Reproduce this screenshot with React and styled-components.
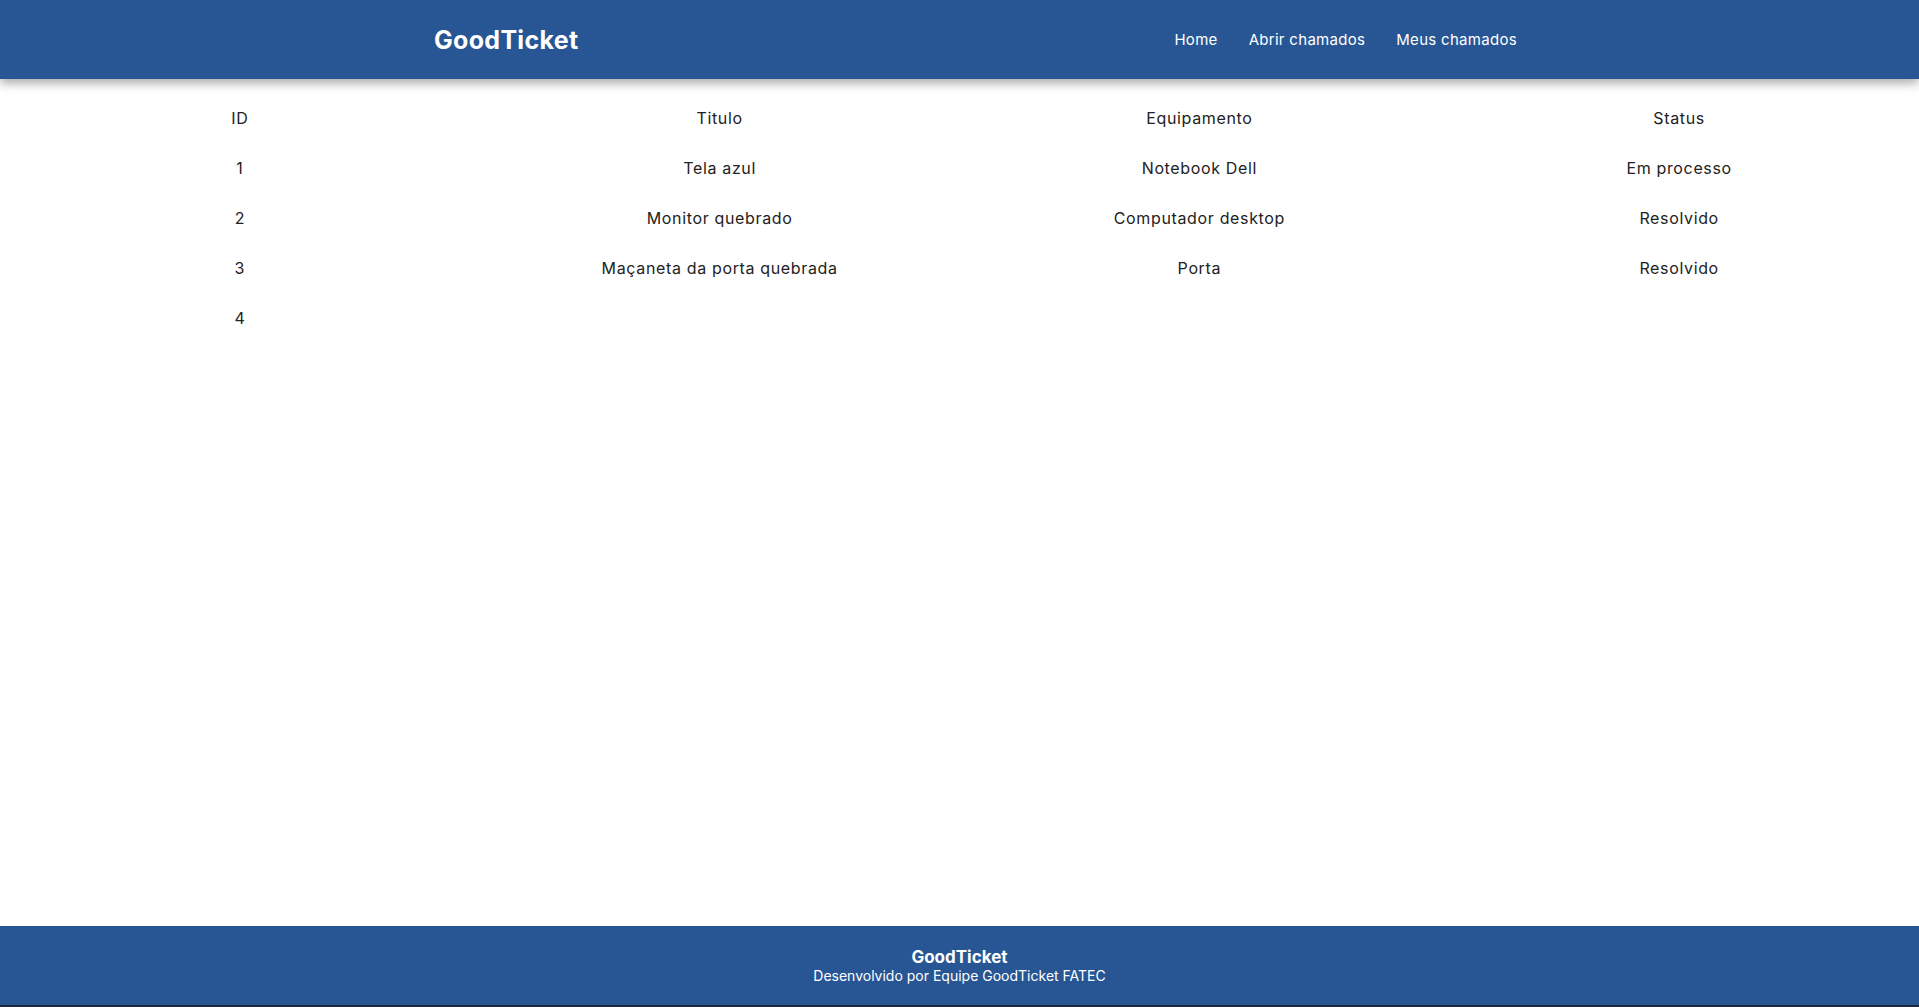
import React from "react";
import styled, { createGlobalStyle } from "styled-components";

const GlobalStyle = createGlobalStyle`
  html, body {
    margin: 0;
    padding: 0;
    background: #ffffff;
    font-family: "Inter", "Open Sans", sans-serif;
  }
  #root {
    min-height: 100vh;
  }
`;

const Page = styled.div`
  min-height: 100vh;
  display: flex;
  flex-direction: column;
`;

const Header = styled.header`
  height: 79px;
  background: #285694;
  box-shadow: 0 4px 10px rgba(0, 0, 0, 0.35);
  display: flex;
  align-items: center;
  justify-content: space-between;
  padding: 0 402px 0 434px;
  position: relative;
  z-index: 1;
`;

const Logo = styled.h1`
  margin: 0;
  color: #ffffff;
  font-size: 25px;
  font-weight: 700;
  letter-spacing: 0.3px;
`;

const Nav = styled.nav`
  display: flex;
  gap: 31px;
  align-items: center;
`;

const NavLink = styled.a`
  color: #ffffff;
  text-decoration: none;
  font-size: 15px;
  letter-spacing: 0.3px;
  font-weight: 400;
  cursor: pointer;
`;

const Main = styled.main`
  flex: 1;
  padding-top: 14px;
`;

const Table = styled.table`
  width: 100%;
  border-collapse: collapse;
  table-layout: fixed;
`;

const Cell = styled.td`
  height: 50px;
  padding: 0;
  text-align: center;
  vertical-align: middle;
  font-size: 16px;
  letter-spacing: 0.65px;
  font-weight: 400;
  color: #222222;
`;

const HeadCell = styled(Cell).attrs({ as: "th" })`
  font-weight: 400;
`;

const Footer = styled.footer`
  box-sizing: border-box;
  height: 81px;
  background: #285694;
  border-bottom: 2px solid #1d2738;
  display: flex;
  flex-direction: column;
  align-items: center;
  justify-content: center;
  color: #ffffff;
`;

const FooterTitle = styled.div`
  font-size: 17px;
  font-weight: 700;
  line-height: 20px;
`;

const FooterText = styled.div`
  font-size: 14px;
  line-height: 18px;
`;

const rows = [
  { id: 1, titulo: "Tela azul", equip: "Notebook Dell", status: "Em processo" },
  { id: 2, titulo: "Monitor quebrado", equip: "Computador desktop", status: "Resolvido" },
  { id: 3, titulo: "Maçaneta da porta quebrada", equip: "Porta", status: "Resolvido" },
  { id: 4, titulo: "", equip: "", status: "" },
];

export default function App() {
  return (
    <>
      <GlobalStyle />
      <Page>
        <Header>
          <Logo>GoodTicket</Logo>
          <Nav>
            <NavLink>Home</NavLink>
            <NavLink>Abrir chamados</NavLink>
            <NavLink>Meus chamados</NavLink>
          </Nav>
        </Header>
        <Main>
          <Table>
            <thead>
              <tr>
                <HeadCell>ID</HeadCell>
                <HeadCell>Titulo</HeadCell>
                <HeadCell>Equipamento</HeadCell>
                <HeadCell>Status</HeadCell>
              </tr>
            </thead>
            <tbody>
              {rows.map((r) => (
                <tr key={r.id}>
                  <Cell>{r.id}</Cell>
                  <Cell>{r.titulo}</Cell>
                  <Cell>{r.equip}</Cell>
                  <Cell>{r.status}</Cell>
                </tr>
              ))}
            </tbody>
          </Table>
        </Main>
        <Footer>
          <FooterTitle>GoodTicket</FooterTitle>
          <FooterText>Desenvolvido por Equipe GoodTicket FATEC</FooterText>
        </Footer>
      </Page>
    </>
  );
}
